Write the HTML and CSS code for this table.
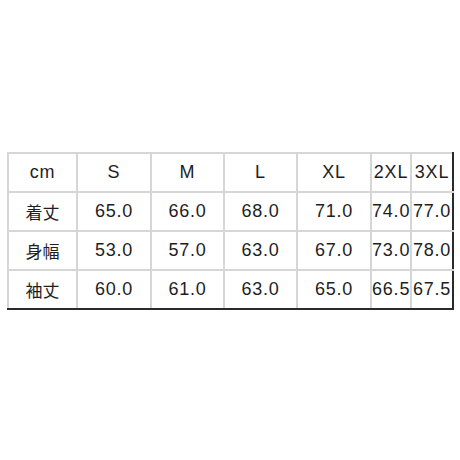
FILE: index.html
```html
<!DOCTYPE html>
<html lang="ja">
<head>
<meta charset="utf-8">
<link rel="stylesheet" href="styles.css">
</head>
<body>
<div class="page">
  <table class="size">
    <colgroup>
      <col class="c0"><col class="c1"><col class="c2"><col class="c3"><col class="c4"><col class="c5"><col class="c6">
    </colgroup>
    <tr><td>cm</td><td>S</td><td>M</td><td>L</td><td>XL</td><td>2XL</td><td>3XL</td></tr>
    <tr><td class="ja">着丈</td><td>65.0</td><td>66.0</td><td>68.0</td><td>71.0</td><td>74.0</td><td>77.0</td></tr>
    <tr><td class="ja">身幅</td><td>53.0</td><td>57.0</td><td>63.0</td><td>67.0</td><td>73.0</td><td>78.0</td></tr>
    <tr><td class="ja">袖丈</td><td>60.0</td><td>61.0</td><td>63.0</td><td>65.0</td><td>66.5</td><td>67.5</td></tr>
  </table>
</div>
</body>
</html>
```
FILE: styles.css
```css
html, body { margin: 0; padding: 0; background: #fff; }
.page {
  width: 460px;
  height: 460px;
  padding: 152px 0 0 7px;
  box-sizing: border-box;
}
.size {
  border-collapse: collapse;
  table-layout: fixed;
  width: 445px;
  font-family: "Liberation Sans", Arial, "Noto Sans CJK JP", sans-serif;
  font-size: 18px;
  letter-spacing: 0.8px;
  color: #1e1e1e;
  border-right: 2px solid #2a2a2a;
  border-bottom: 2px solid #2a2a2a;
}
.c0 { width: 69px; }
.c1 { width: 74px; }
.c2 { width: 73px; }
.c3 { width: 73px; }
.c4 { width: 74px; }
.c5 { width: 40px; }
.c6 { width: 42px; }
.size td {
  height: 37px;
  padding: 0;
  text-align: center;
  vertical-align: middle;
  border: 2px solid #d6d6d6;
  white-space: nowrap;
  overflow: visible;
}
.size tr td:last-child { border-right: 2px solid #2a2a2a; }
.size tr:last-child td { border-bottom: 2px solid #2a2a2a; }
.size td.ja {
  font-family: "Noto Sans CJK JP", sans-serif;
  font-size: 17px;
  letter-spacing: 0;
}
```
